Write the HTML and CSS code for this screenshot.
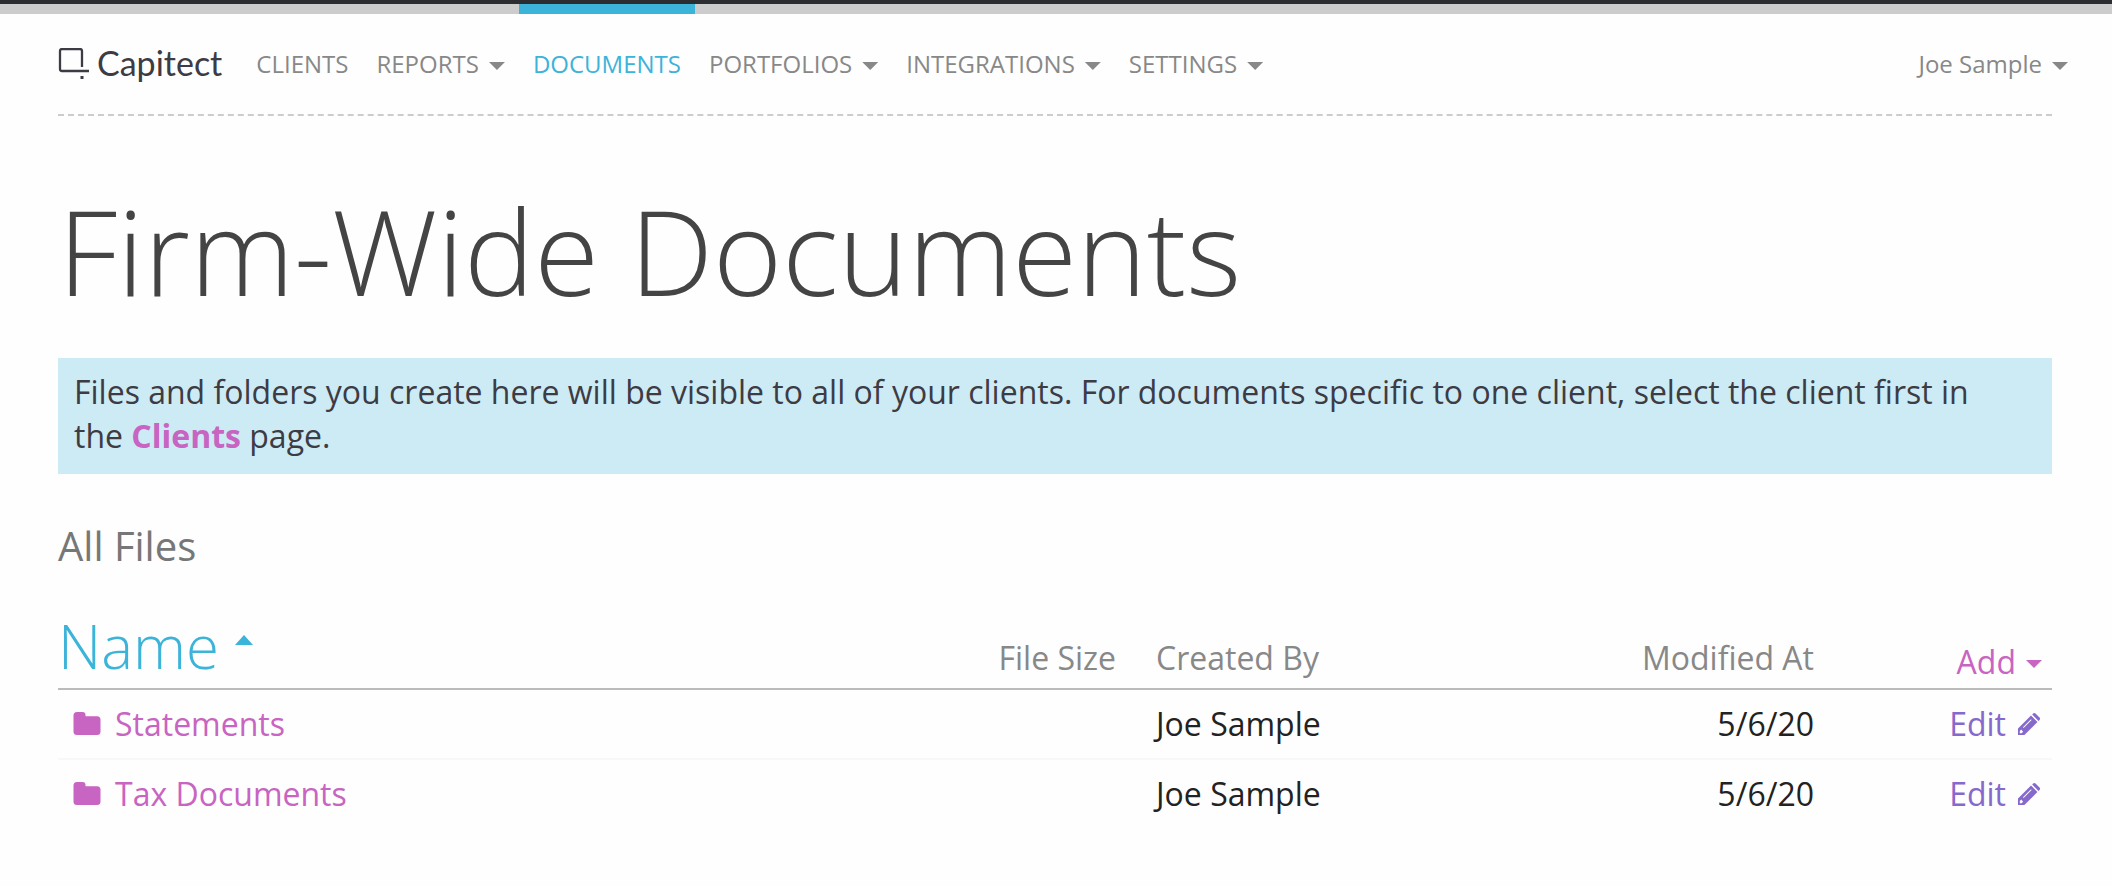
FILE: index.html
```html
<!DOCTYPE html>
<html lang="en">
<head>
<meta charset="utf-8">
<title>Firm-Wide Documents - Capitect</title>
<link rel="stylesheet" href="styles.css">
</head>
<body>
<svg class="sprite" aria-hidden="true">
  <symbol id="folder" viewBox="0 0 28 24"><path d="M4 0h5.500a3 3 0 0 1 3 3v1.300h11.500a3.500 3.500 0 0 1 3.500 3.500v11.700a3.500 3.500 0 0 1-3.500 3.500h-20a3.500 3.500 0 0 1-3.500-3.500v-16a3.500 3.500 0 0 1 3.500-3.500z"/></symbol>
  <symbol id="pencil" viewBox="0 0 22 22"><path fill-rule="evenodd" d="M0 22v-6.500L13 2.600l6.400 6.400L6.400 22zM1.800 18.100v2.200h1.800l1.500-1.500-1.800-2.200zM5 14.300l.6.600 8-8-.6-.6zM14.200 1.500l.9-.9q1.200-1.200 2.400 0l4 4q1.200 1.200 0 2.400l-1 .9z"/></symbol>
</svg>
<header class="topbar">
  <a class="logo" href="#">
    <svg class="logo-mark" viewBox="0 0 31 32" aria-hidden="true"><path d="M31 23H4a2 2 0 0 1-2-2V3a2 2 0 0 1 2-2h18a2 2 0 0 1 2 2v16" fill="none" stroke="currentColor" stroke-width="2.300"/><path d="M22.500 28h3v3h-3z" fill="currentColor"/></svg>
    <span>Capitect</span>
  </a>
  <nav class="menu">
    <a class="item" href="#">CLIENTS</a>
    <button class="item" type="button">REPORTS<span class="caret"></span></button>
    <a class="item active" href="#" aria-current="page">DOCUMENTS</a>
    <button class="item" type="button">PORTFOLIOS<span class="caret"></span></button>
    <button class="item" type="button">INTEGRATIONS<span class="caret"></span></button>
    <button class="item" type="button">SETTINGS<span class="caret"></span></button>
  </nav>
  <button class="item" type="button">Joe Sample<span class="caret"></span></button>
</header>
<main class="content">
  <h1>Firm-Wide Documents</h1>
  <p class="notice">Files and folders you create here will be visible to all of your clients. For documents specific to one client, select the client first in the <a href="#">Clients</a> page.</p>
  <h2>All Files</h2>
  <table class="files">
    <thead>
      <tr>
        <th class="name" aria-sort="ascending"><button class="sort" type="button">Name<span class="caret up"></span></button></th>
        <th class="size">File Size</th>
        <th class="author">Created By</th>
        <th class="date">Modified At</th>
        <th class="action"><button class="add" type="button">Add<span class="caret"></span></button></th>
      </tr>
    </thead>
    <tbody>
      <tr>
        <td><a class="file" href="#"><svg class="folder" aria-hidden="true"><use href="#folder"/></svg>Statements</a></td>
        <td></td>
        <td class="author">Joe Sample</td>
        <td class="date">5/6/20</td>
        <td class="action"><a class="edit" href="#">Edit<svg class="pencil" aria-hidden="true"><use href="#pencil"/></svg></a></td>
      </tr>
      <tr>
        <td><a class="file" href="#"><svg class="folder" aria-hidden="true"><use href="#folder"/></svg>Tax Documents</a></td>
        <td></td>
        <td class="author">Joe Sample</td>
        <td class="date">5/6/20</td>
        <td class="action"><a class="edit" href="#">Edit<svg class="pencil" aria-hidden="true"><use href="#pencil"/></svg></a></td>
      </tr>
    </tbody>
  </table>
</main>
</body>
</html>
```
FILE: styles.css
```css
* { box-sizing: border-box; }

body {
  margin: 0;
  border-top: 4px solid #2b2d31;
  background: #fefefe;
  color: #222;
  font: 32px/44px "Open Sans", "Noto Sans", sans-serif;
}

a { color: #c864c1; text-decoration: none; }

button {
  border: 0;
  padding: 0;
  background: none;
  color: inherit;
  font: inherit;
  cursor: pointer;
}

.sprite { display: none; }

.topbar {
  display: flex;
  padding: 0 30px 0 58px;
  background: linear-gradient(#ccc 10px, transparent 10px);
}

.logo {
  display: flex;
  align-items: center;
  gap: 8px;
  margin-right: 20px;
  padding-top: 8px;
  color: #3d3b44;
  font-family: Lato, sans-serif;
  font-size: 34px;
}

.logo-mark { width: 31px; height: 32px; margin-top: 2px; }

.menu { display: flex; flex: 1; }

.item {
  display: flex;
  align-items: center;
  height: 110px;
  border-top: 10px solid transparent;
  padding: 0 14px;
  color: #888;
  font-size: 24px;
  line-height: 32px;
}

.item.active { border-color: #3cb3d9; color: #3cb3d9; }

.caret {
  width: 16px;
  height: 8px;
  margin: 4px 0 0 10px;
  background: currentColor;
  clip-path: polygon(0 0, 100% 0, 50% 100%);
}

.content {
  margin: 0 60px 0 58px;
  border-top: 2px dashed #ccc;
}

h1 {
  margin: 50px 0 22px;
  color: #444;
  font-size: 118px;
  font-weight: 300;
  line-height: 170px;
}

.notice {
  margin: 0 0 46px;
  padding: 12px 60px 16px 16px;
  background: #cdebf5;
  color: #3d3b44;
}

.notice a { font-weight: 700; }

h2 {
  margin: 0;
  color: #777;
  font-size: 40px;
  font-weight: 400;
  line-height: 52px;
}

.files {
  width: 100%;
  margin-top: 36px;
  border-spacing: 0;
  table-layout: fixed;
}

th {
  height: 82px;
  border-bottom: 2px solid #bbb;
  padding: 0 0 8px;
  color: #888;
  font-weight: 400;
  text-align: left;
  vertical-align: bottom;
}

td {
  height: 70px;
  border-bottom: 2px solid #f8f8f8;
  padding: 0;
}

tbody tr:last-child td { border-color: transparent; }

.size { width: 160px; text-align: right; padding-right: 20px; }
.author { width: 398px; padding-left: 20px; }
.date { width: 280px; text-align: right; }
.action { width: 238px; padding-right: 10px; text-align: right; }
td.action { padding-right: 12px; }
th.action { padding-bottom: 4px; }

.sort, .file, .edit { display: flex; align-items: center; }
.add { display: inline-flex; align-items: center; vertical-align: top; }

.sort {
  padding-bottom: 4px;
  color: #3cb3d9;
  font-size: 60px;
  font-weight: 300;
  line-height: 60px;
}

.caret.up {
  width: 18px;
  height: 10px;
  margin: 0 0 12px 16px;
  clip-path: polygon(0 100%, 100% 100%, 50% 0);
}

.add { color: #c864c1; }

.file { gap: 14px; padding-left: 15px; }
.folder { width: 28px; height: 24px; fill: currentColor; }

.edit { justify-content: flex-end; gap: 12px; color: #8669cc; }
.pencil { width: 22px; height: 22px; fill: currentColor; }
```
